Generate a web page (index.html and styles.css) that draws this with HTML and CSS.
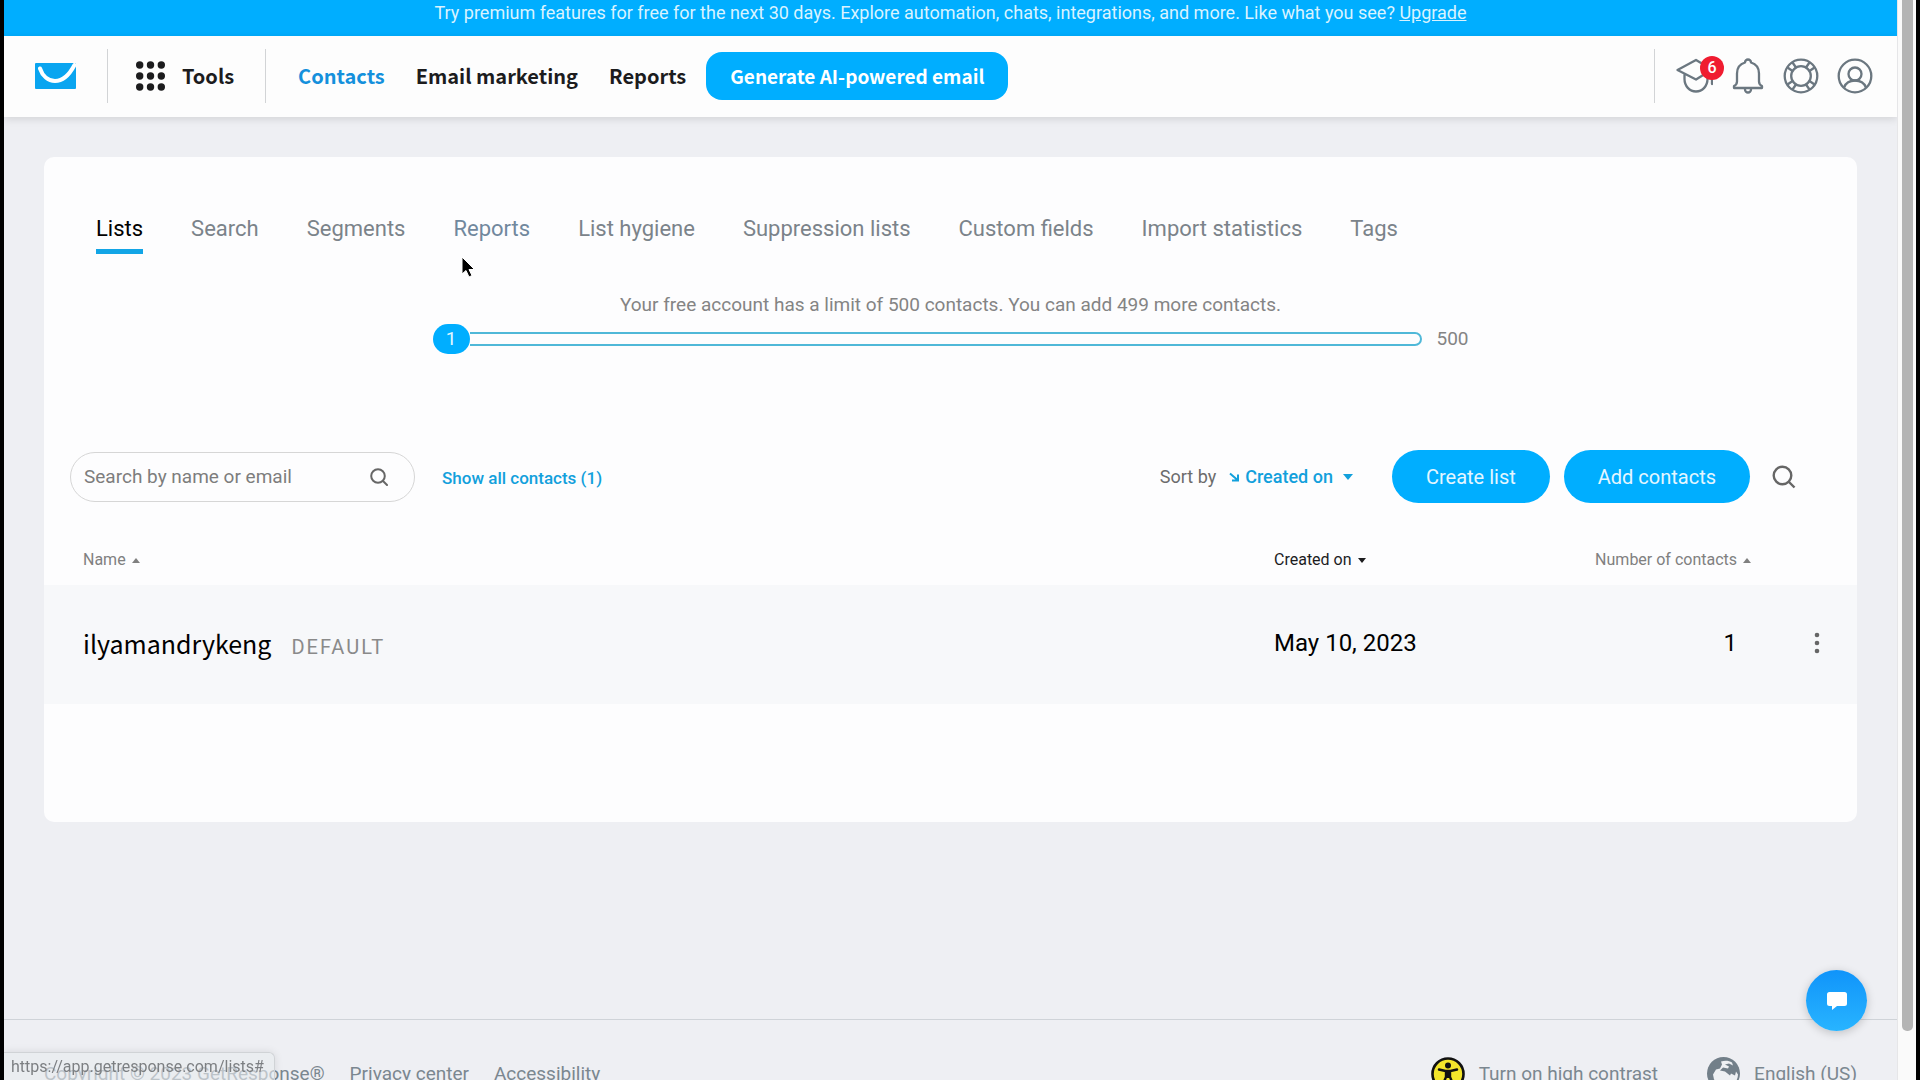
FILE: index.html
```html
<!DOCTYPE html>
<html lang="en">
<head>
<meta charset="utf-8">
<meta name="viewport" content="width=device-width, initial-scale=1">
<title>Contacts – Lists</title>
<link rel="stylesheet" href="styles.css">
</head>
<body>
<div class="window">
  <div class="page">
    <div class="banner">Try premium features for free for the next 30 days. Explore automation, chats, integrations, and more. Like what you see? <a href="#">Upgrade</a></div>
    <header class="topbar">
      <a class="logo" href="#" aria-label="Home">
        <svg width="41" height="26" viewBox="0 0 41 26"><rect width="41" height="26" rx="1" fill="#0aa5f0"/><path d="M5 5.500C7.500 13 13 18 20 18c8 0 14-5.500 19.500-16" fill="none" stroke="#fff" stroke-width="4" stroke-linecap="round"/></svg>
      </a>
      <button class="tools" type="button">
        <svg width="29" height="30" viewBox="0 0 29 30" fill="#1c1c1e"><circle cx="3.700" cy="4" r="3.700"/><circle cx="14.500" cy="4" r="3.700"/><circle cx="25.300" cy="4" r="3.700"/><circle cx="3.700" cy="15" r="3.700"/><circle cx="14.500" cy="15" r="3.700"/><circle cx="25.300" cy="15" r="3.700"/><circle cx="3.700" cy="26" r="3.700"/><circle cx="14.500" cy="26" r="3.700"/><circle cx="25.300" cy="26" r="3.700"/></svg>
        Tools
      </button>
      <nav class="main-nav">
        <a class="current" href="#">Contacts</a>
        <a href="#">Email marketing</a>
        <a href="#">Reports</a>
      </nav>
      <button class="generate" type="button">Generate AI-powered email</button>
      <div class="account">
        <button class="icon-button" type="button" aria-label="Learning">
          <svg width="38" height="36" viewBox="0 0 38 36" fill="none" stroke="#6b7780" stroke-width="2.300" stroke-linejoin="round" stroke-linecap="round"><path d="M2.500 12 21 2l16 9.500L21 21.500zM9.500 16.500V21c0 7 5 12.500 11.500 12.500S32.500 28 32.500 21v-5.500M37 14v12"/></svg>
          <span class="badge">6</span>
        </button>
        <button class="icon-button" type="button" aria-label="Notifications">
          <svg width="34" height="36" viewBox="-2 0 34 36" fill="none" stroke="#6b7780" stroke-width="2.300" stroke-linejoin="round" stroke-linecap="round"><path d="M12 4.500a3 3 0 0 1 6 0c5 1.500 8 5.500 8 11v8c0 2 1 3.500 3 4.500v2H1v-2c2-1 3-2.500 3-4.500v-8c0-5.500 3-9.500 8-11zM12 31.500a3 3 0 0 0 6 0"/></svg>
        </button>
        <button class="icon-button" type="button" aria-label="Help">
          <svg width="36" height="36" viewBox="0 0 36 36" fill="none" stroke="#6b7780" stroke-width="2.300"><circle cx="18" cy="18" r="16.300"/><circle cx="18" cy="18" r="9.800"/><path d="M9.500 4.500l3.500 5M4.500 9.500l5 3.500M26.500 4.500l-3.500 5M31.500 9.500l-5 3.500M9.500 31.500l3.500-5M4.500 26.500l5-3.500M26.500 31.500l-3.500-5M31.500 26.500l-5-3.500"/></svg>
        </button>
        <button class="icon-button" type="button" aria-label="Account">
          <svg width="36" height="36" viewBox="0 0 36 36" fill="none" stroke="#6b7780" stroke-width="2.300"><circle cx="18" cy="18" r="16.300"/><circle cx="18" cy="16" r="6.500"/><path d="M7 29.500c2-5 6-7 11-7s9 2 11 7"/></svg>
        </button>
      </div>
    </header>

    <main class="card">
      <nav class="tabs">
        <a class="active" href="#">Lists</a>
        <a href="#">Search</a>
        <a href="#">Segments</a>
        <a class="hovered" href="#">Reports<svg class="cursor" width="16" height="24" viewBox="0 0 16 24"><path d="M1 1v17l4-3.500 3 6.500 3-1.500-3-6h5.500z" fill="#000" stroke="#fff"/></svg></a>
        <a href="#">List hygiene</a>
        <a href="#">Suppression lists</a>
        <a href="#">Custom fields</a>
        <a href="#">Import statistics</a>
        <a href="#">Tags</a>
      </nav>

      <section class="limit">
        <p>Your free account has a limit of 500 contacts. You can add 499 more contacts.</p>
        <div class="meter">
          <span class="meter-value">1</span>
          <span class="meter-track"></span>
          <span class="meter-max">500</span>
        </div>
      </section>

      <div class="toolbar">
        <label class="search">
          <input type="text" placeholder="Search by name or email" aria-label="Search by name or email">
          <svg width="18" height="18" viewBox="0 0 18 18" fill="none" stroke="#666" stroke-width="2" stroke-linecap="round"><circle cx="8" cy="8" r="6.800"/><path d="m13 13 4 4"/></svg>
        </label>
        <a class="show-all" href="#">Show all contacts (1)</a>
        <div class="sort">
          <span>Sort by</span>
          <button type="button">
            <svg width="10" height="10" viewBox="0 0 10 10" fill="none" stroke="#12a0dc" stroke-width="2"><path d="m1 1.500 7 6M9 2.500V8.500H3"/></svg>
            Created on
            <svg class="sort-caret" width="10" height="6" viewBox="0 0 10 6" fill="#12a0dc"><path d="M0 0h10L5 6z"/></svg>
          </button>
        </div>
        <div class="actions">
          <button class="primary" type="button">Create list</button>
          <button class="primary" type="button">Add contacts</button>
        </div>
        <button class="find" type="button" aria-label="Search lists">
          <svg width="24" height="24" viewBox="0 0 24 24" fill="none" stroke="#666" stroke-width="2.400"><circle cx="10.500" cy="10.500" r="8.800"/><path d="m16.500 16.500 6 6"/></svg>
        </button>
      </div>

      <table class="lists">
        <thead>
          <tr>
            <th class="col-name">Name <svg width="8" height="5" viewBox="0 0 8 5"><path d="M0 5h8L4 0z"/></svg></th>
            <th class="col-date sorted">Created on <svg width="8" height="5" viewBox="0 0 8 5"><path d="M0 0h8L4 5z"/></svg></th>
            <th class="col-count">Number of contacts <svg width="8" height="5" viewBox="0 0 8 5"><path d="M0 5h8L4 0z"/></svg></th>
            <th class="col-menu"></th>
          </tr>
        </thead>
        <tbody>
          <tr>
            <td class="col-name"><a class="list-name" href="#">ilyamandrykeng</a><span class="tag">DEFAULT</span></td>
            <td class="col-date">May 10, 2023</td>
            <td class="col-count">1</td>
            <td class="col-menu"><button type="button" aria-label="List actions"><svg width="6" height="22" viewBox="0 0 6 22" fill="#666"><circle cx="3" cy="3" r="2.300"/><circle cx="3" cy="11" r="2.300"/><circle cx="3" cy="19" r="2.300"/></svg></button></td>
          </tr>
        </tbody>
      </table>
    </main>

    <footer class="footer">
      <span>Copyright © 2023 GetResponse®</span>
      <a href="#">Privacy center</a>
      <a href="#">Accessibility</a>
      <button class="contrast" type="button">
        <svg width="34" height="34" viewBox="0 0 34 34"><circle cx="17" cy="17" r="15.500" fill="#f3e52b" stroke="#111" stroke-width="2.600"/><circle cx="17" cy="8.500" r="3" fill="#111"/><path d="M8 12.500l6.500 1.500h5l6.500-1.500M15 14v6l-3 7M19 14v6l3 7" fill="none" stroke="#111" stroke-width="2.400" stroke-linecap="round"/><path d="M14 13h6v8h-6z" fill="#111"/></svg>
        Turn on high contrast
      </button>
      <button class="language" type="button">
        <svg width="33" height="33" viewBox="0 0 33 33"><circle cx="16.500" cy="16.500" r="16.500" fill="#727f89"/><path d="M14 4.500c4-1.500 8-1 11 1l1 3-4-2-4 1 4 2-1 2-5-1-3 3 5 1 5 4 1-2 4 2 1-4 2 3c0 4-2 8-5 10l-4-3-2 5-5 1-4-5-4-3-1-5 3-5 4-1 2-4z" fill="#eef0f3"/></svg>
        English (US)
      </button>
    </footer>
  </div>
  <div class="scrollbar"><div class="thumb"></div></div>
</div>
<button class="chat" type="button" aria-label="Open chat">
  <svg width="20" height="18" viewBox="0 0 20 18" fill="#fff"><path d="M2.500 0h15A2.500 2.500 0 0 1 20 2.500v9a2.500 2.500 0 0 1-2.500 2.500H10l-5 4v-4H2.500A2.500 2.500 0 0 1 0 11.500v-9A2.500 2.500 0 0 1 2.500 0z"/></svg>
</button>
<div class="status">https://app.getresponse.com/lists#</div>
</body>
</html>
```
FILE: styles.css
```css
* { box-sizing: border-box; }

body {
  margin: 0;
  height: 100vh;
  overflow: hidden;
  background: #000;
  color: #000;
  font: 19px/24px Roboto, sans-serif;
}

a { color: inherit; text-decoration: none; }

button {
  padding: 0;
  border: 0;
  background: none;
  color: inherit;
  font: inherit;
  cursor: pointer;
}

svg { display: block; flex: none; }

.window {
  display: flex;
  height: 100vh;
  padding: 0 4px;
  overflow: hidden;
}

.page {
  flex: 1;
  display: flex;
  flex-direction: column;
  background: #eeeff3;
}

.scrollbar {
  width: 19px;
  border-left: 1px solid #e6e6e8;
  background: #fafafa;
  padding: 0 3px 0 4px;
}

.thumb {
  height: 1031px;
  max-height: 96%;
  border-radius: 0 0 5px 5px;
  background: #b4b4b4;
}

.banner {
  flex: none;
  height: 36px;
  padding-top: 1px;
  background: #00aeff;
  color: #d9f3ff;
  font-size: 18px;
  text-align: center;
}

.banner a { text-decoration: underline; }

/* Header */
.topbar {
  flex: none;
  display: flex;
  align-items: center;
  height: 81px;
  padding-bottom: 1px;
  background: #fdfdfd;
  box-shadow: 0 2px 8px rgba(0, 0, 0, .12);
  color: #1c1c1e;
  font: bold 20px/24px "Noto Sans CJK SC", sans-serif;
}

.logo { padding: 0 31px; }

.tools {
  display: flex;
  align-items: center;
  gap: 17px;
  height: 54px;
  padding: 0 31px 0 28px;
  border: solid #d2d4d6;
  border-width: 0 1px;
}

.main-nav { display: flex; gap: 31px; padding: 0 20px 0 32px; }
.main-nav .current { color: #1490dc; }

.generate {
  height: 48px;
  padding: 0 24px;
  border-radius: 16px;
  background: #00aeff;
  color: #fff;
  font-size: 19px;
}

.account {
  display: flex;
  align-items: center;
  gap: 18px;
  height: 54px;
  margin-left: auto;
  padding: 0 24px 0 20px;
  border-left: 1px solid #d2d4d6;
}

.icon-button { position: relative; }

.badge {
  position: absolute;
  top: -2px;
  right: -11px;
  width: 24px;
  height: 24px;
  border-radius: 50%;
  background: #f01c30;
  color: #fff;
  font: 500 16px/24px Roboto, sans-serif;
}

/* Lists card */
.card {
  flex: none;
  margin: 40px 40px 0;
  padding-bottom: 118px;
  border-radius: 10px;
  background: #fdfdfe;
}

.tabs {
  display: flex;
  gap: 48px;
  padding: 56px 52px 0;
  color: #7b838a;
  font-size: 22px;
  line-height: 32px;
}

.tabs a { padding-bottom: 9px; }
.tabs .active { padding-bottom: 4px; border-bottom: 5px solid #12a5e6; color: #000; }
.tabs .hovered { position: relative; color: #71889d; }

.cursor {
  position: absolute;
  top: 43px;
  left: 8px;
}

.limit { color: #848484; }
.limit p { margin: 39px 0 7px; text-align: center; }

.meter {
  display: flex;
  align-items: center;
  width: 1036px;
  max-width: 90%;
  margin: 0 auto;
}

.meter-value {
  width: 37px;
  border-radius: 15px;
  background: #00aeff;
  color: #e0f6ff;
  line-height: 30px;
  text-align: center;
}

.meter-track {
  flex: 1;
  height: 14px;
  margin-right: 14px;
  border: 2px solid #4fb8d8;
  border-left: 0;
  border-radius: 0 7px 7px 0;
}

.toolbar {
  display: flex;
  align-items: center;
  margin-top: 96px;
  padding: 0 61px 0 26px;
}

.search {
  display: flex;
  align-items: center;
  width: 345px;
  height: 50px;
  padding: 0 26px 0 13px;
  border: 1px solid #d6d6d6;
  border-radius: 25px;
}

.search input {
  flex: 1;
  min-width: 0;
  padding: 0;
  border: 0;
  outline: 0;
  background: none;
  font: inherit;
}

.search input::placeholder { color: #7d7d7d; opacity: 1; }

.show-all {
  margin-left: 27px;
  padding-top: 2px;
  color: #12a0dc;
  font-size: 17px;
  font-weight: 500;
}

.sort {
  display: flex;
  gap: 13px;
  margin-left: auto;
  color: #6c6c6c;
  font-size: 18px;
}

.sort button {
  display: flex;
  align-items: center;
  gap: 6px;
  color: #12a0dc;
  font-weight: 500;
}

.sort-caret { margin-left: 4px; }

.actions { display: flex; gap: 14px; margin: 0 22px 0 39px; }

.primary {
  height: 53px;
  padding: 0 34px;
  border-radius: 27px;
  background: #00aeff;
  color: #e4f6ff;
  font-size: 20px;
}

/* Table */
.lists {
  width: 100%;
  margin-top: 32px;
  border-collapse: collapse;
  table-layout: fixed;
}

.lists th {
  height: 50px;
  padding: 0;
  color: #808080;
  font-size: 16px;
  font-weight: 400;
  text-align: left;
  vertical-align: middle;
}

.lists th svg { display: inline-block; margin-left: 2px; vertical-align: middle; fill: currentColor; }
.lists .sorted { color: #1c1c1e; }

.lists td {
  height: 119px;
  padding: 0 0 4px;
  background: #f7f8fa;
  font-size: 24px;
}

.lists .col-name { padding-left: 39px; }
.lists .col-date { width: 240px; }
.lists .col-count { width: 237px; text-align: right; }
.lists td.col-count { padding-right: 14px; }
.lists .col-menu { width: 106px; padding-left: 63px; padding-bottom: 0; }

.list-name {
  margin-right: 20px;
  font: 25px/32px "Noto Sans CJK SC", sans-serif;
}

.tag {
  color: #8a8a8a;
  font-size: 20px;
  letter-spacing: 2px;
}

/* Footer */
.footer {
  flex: none;
  display: flex;
  align-items: center;
  gap: 25px;
  margin-top: auto;
  margin-bottom: -45px;
  height: 106px;
  padding: 2px 40px 0;
  border-top: 1px solid #cfd3d8;
  color: #7b8790;
}

.contrast, .language { display: flex; align-items: center; gap: 14px; }
.contrast { margin-left: auto; }
.language { margin-left: 24px; }

.chat {
  position: fixed;
  right: 53px;
  bottom: 49px;
  display: grid;
  place-items: center;
  width: 61px;
  height: 61px;
  border-radius: 50%;
  background: linear-gradient(#1094fa, #28b4ff);
  box-shadow: 0 2px 10px rgba(0, 0, 0, .2);
}

.status {
  position: fixed;
  left: 4px;
  bottom: 0;
  height: 28px;
  padding: 2px 10px 0 7px;
  border: solid #d0d3d6;
  border-width: 1px 1px 0 0;
  border-radius: 0 6px 0 0;
  background: rgba(232, 235, 238, .6);
  box-shadow: 0 0 8px rgba(0, 0, 0, .1);
  color: #7c7f82;
  font-size: 16px;
}
```
